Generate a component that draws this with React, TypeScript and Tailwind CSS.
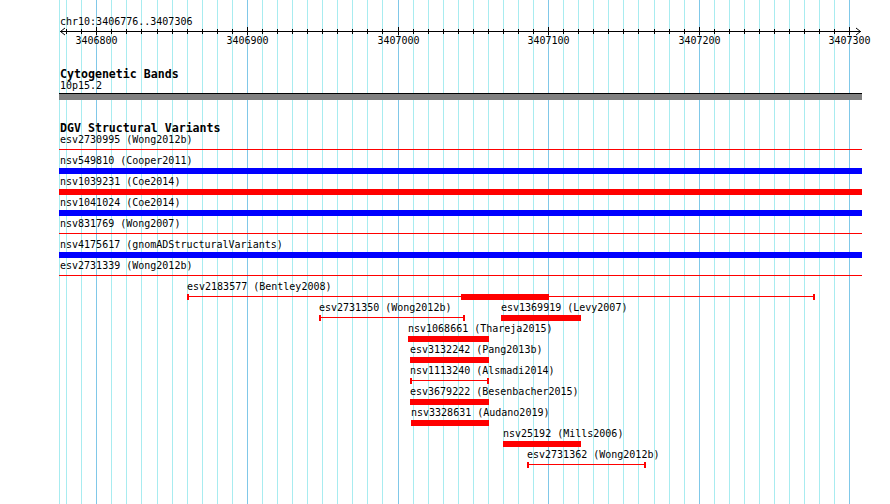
import React from "react";

// pixel scale: 3406800 sits at x=96, 10bp per grid step
const X0 = 96.3;
const STEP = 15.06;
const LEFT = 59;

const gridX = (k: number) => Math.round(X0 + k * STEP);

type Glyph = "line" | "bar" | "capped" | "thick";

interface Feature {
  label: string;
  x1: number;
  x2: number;
  kind: Glyph;
  t1?: number;
  t2?: number;
}

const topRows: { label: string; kind: "line" | "bar"; color: string }[] = [
  { label: "esv2730995 (Wong2012b)", kind: "line", color: "bg-[#ff0000]" },
  { label: "nsv549810 (Cooper2011)", kind: "bar", color: "bg-[#0000ff]" },
  { label: "nsv1039231 (Coe2014)", kind: "bar", color: "bg-[#ff0000]" },
  { label: "nsv1041024 (Coe2014)", kind: "bar", color: "bg-[#0000ff]" },
  { label: "nsv831769 (Wong2007)", kind: "line", color: "bg-[#ff0000]" },
  { label: "nsv4175617 (gnomADStructuralVariants)", kind: "bar", color: "bg-[#0000ff]" },
  { label: "esv2731339 (Wong2012b)", kind: "line", color: "bg-[#ff0000]" },
];

const packed: Feature[][] = [
  [{ label: "esv2183577 (Bentley2008)", x1: 187, x2: 815, kind: "thick", t1: 461, t2: 549 }],
  [
    { label: "esv2731350 (Wong2012b)", x1: 319, x2: 465, kind: "capped" },
    { label: "esv1369919 (Levy2007)", x1: 501, x2: 581, kind: "bar" },
  ],
  [{ label: "nsv1068661 (Thareja2015)", x1: 408, x2: 489, kind: "bar" }],
  [{ label: "esv3132242 (Pang2013b)", x1: 410, x2: 489, kind: "bar" }],
  [{ label: "nsv1113240 (Alsmadi2014)", x1: 410, x2: 489, kind: "capped" }],
  [{ label: "esv3679222 (Besenbacher2015)", x1: 410, x2: 489, kind: "bar" }],
  [{ label: "nsv3328631 (Audano2019)", x1: 411, x2: 489, kind: "bar" }],
  [{ label: "nsv25192 (Mills2006)", x1: 503, x2: 581, kind: "bar" }],
  [{ label: "esv2731362 (Wong2012b)", x1: 527, x2: 646, kind: "capped" }],
];

function GridLines() {
  const lines = [];
  for (let k = -2; k <= 50; k++) {
    const major = k % 10 === 0;
    lines.push(
      <div
        key={k}
        className={`absolute top-0 h-full w-px ${major ? "bg-[#80c8e8]" : "bg-[#a8ecf0]"}`}
        style={{ left: gridX(k) }}
      />
    );
  }
  return (
    <div className="absolute inset-0">
      <div className="absolute top-0 h-full w-px bg-[#a8ecf0]" style={{ left: LEFT }} />
      {lines}
    </div>
  );
}

function Ruler() {
  const ticks = [];
  for (let k = -2; k <= 50; k++) {
    const x = gridX(k) + 0.5;
    const major = k % 10 === 0;
    ticks.push(
      <line key={"t" + k} x1={x} x2={x} y1={major ? 27 : 29} y2={major ? 35 : 34} stroke="#000" strokeWidth={1} />
    );
    if (major) {
      ticks.push(
        <text key={"l" + k} x={x} y={44} textAnchor="middle" fontSize={10} fill="#000">
          {3406800 + k * 10}
        </text>
      );
    }
  }
  return (
    <svg width={890} height={50} className="block font-['DejaVu_Sans_Mono',monospace]">
      <text x={60} y={25} fontSize={10} fill="#000">
        chr10:3406776..3407306
      </text>
      <line x1={60} x2={861} y1={31.5} y2={31.5} stroke="#000" strokeWidth={1} />
      <polyline points="65,28 60.5,31.5 65,35" fill="none" stroke="#000" strokeWidth={1} />
      <polyline points="856,28 860.5,31.5 856,35" fill="none" stroke="#000" strokeWidth={1} />
      {ticks}
    </svg>
  );
}

function PackedFeature({ f }: { f: Feature }) {
  const left = f.x1 - LEFT;
  const width = f.x2 - f.x1;
  return (
    <>
      <div className="absolute top-0 whitespace-nowrap leading-[15px]" style={{ left }}>
        {f.label}
      </div>
      <div className="absolute top-[15px] h-[6px]" style={{ left, width }}>
        {f.kind === "bar" && <div className="h-full w-full bg-[#ff0000]" />}
        {f.kind !== "bar" && (
          <div className="flex h-full w-full items-center">
            <div className="h-full w-[2px] bg-[#ff0000]" />
            <div className="mb-[1px] h-px flex-1 bg-[#ff0000]" />
            <div className="h-full w-[2px] bg-[#ff0000]" />
          </div>
        )}
        {f.kind === "thick" && f.t1 && f.t2 && (
          <div
            className="absolute top-0 h-full bg-[#ff0000]"
            style={{ left: f.t1 - f.x1, width: f.t2 - f.t1 }}
          />
        )}
      </div>
    </>
  );
}

export default function App() {
  return (
    <div className="relative h-[504px] w-[890px] overflow-hidden bg-white text-[10px] text-black font-['DejaVu_Sans_Mono',monospace]">
      <GridLines />
      <div className="relative">
        <Ruler />

        <div className="pl-[59px] pt-[18px]">
          <div className="h-[10px] whitespace-nowrap pl-px text-[11.6px] font-bold leading-[13px]">Cytogenetic Bands</div>
          <div className="h-[15px] pl-px leading-[15px]">10p15.2</div>
          <div className="h-[7px] w-[803px] border-t border-black bg-[#808080]" />

          <div className="mt-[22px] h-[10px] whitespace-nowrap pl-px text-[11.6px] font-bold leading-[13px]">
            DGV Structural Variants
          </div>
          {topRows.map((r) => (
            <div key={r.label} className="h-[21px] w-[803px]">
              <div className="h-[15px] whitespace-nowrap pl-px leading-[15px]">{r.label}</div>
              <div className="h-[6px]">
                {r.kind === "bar" ? (
                  <div className={`h-full w-full ${r.color}`} />
                ) : (
                  <div className={`mt-[2px] h-px w-full ${r.color}`} />
                )}
              </div>
            </div>
          ))}

          <div className="w-[803px]">
            {packed.map((row, i) => (
              <div key={i} className="relative h-[21px]">
                {row.map((f) => (
                  <PackedFeature key={f.label} f={f} />
                ))}
              </div>
            ))}
          </div>
        </div>
      </div>
    </div>
  );
}
